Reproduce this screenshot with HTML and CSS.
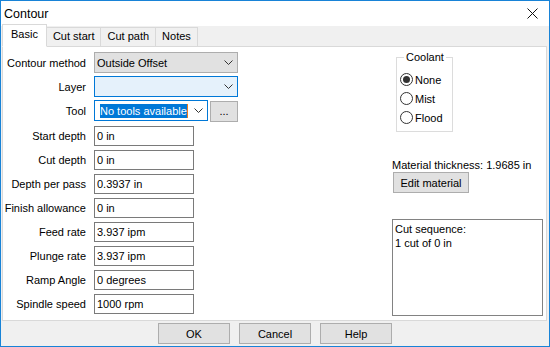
FILE: index.html
```html
<!DOCTYPE html>
<html lang="en">
<head>
  <meta charset="UTF-8" />
  <title>Contour</title>
  <link rel="stylesheet" href="styles.css">
</head>
<body>

<div class="window">
  <div class="titlebar">
    <span class="title">Contour</span>
    <svg class="close" width="11" height="11" viewBox="0 0 11 11">
      <path d="M0.5 0.5 L10.5 10.5 M10.5 0.5 L0.5 10.5" stroke="#111" stroke-width="1" fill="none"/>
    </svg>
  </div>

  <div class="tabs">
    <div class="tab active">Basic</div>
    <div class="tab">Cut start</div>
    <div class="tab">Cut path</div>
    <div class="tab">Notes</div>
  </div>

  <div class="panel">
    <div class="form">
      <div class="row">
        <label>Contour method</label>
        <div class="combo">
          <span>Outside Offset</span>
          <svg class="chev" width="9" height="5" viewBox="0 0 9 5"><path d="M0.5 0.5 L4.5 4.5 L8.5 0.5" stroke="#333" fill="none"/></svg>
        </div>
      </div>
      <div class="row">
        <label>Layer</label>
        <div class="combo focus">
          <span></span>
          <svg class="chev" width="9" height="5" viewBox="0 0 9 5"><path d="M0.5 0.5 L4.5 4.5 L8.5 0.5" stroke="#333" fill="none"/></svg>
        </div>
      </div>
      <div class="row">
        <label>Tool</label>
        <div class="combo edit">
          <span class="sel">No tools available</span><span class="caret"></span>
          <svg class="chev" width="9" height="5" viewBox="0 0 9 5"><path d="M0.5 0.5 L4.5 4.5 L8.5 0.5" stroke="#333" fill="none"/></svg>
        </div>
        <button class="btn dots">...</button>
      </div>

      <div class="row field first">
        <label>Start depth</label>
        <input type="text" value="0 in">
      </div>
      <div class="row field">
        <label>Cut depth</label>
        <input type="text" value="0 in">
      </div>
      <div class="row field">
        <label>Depth per pass</label>
        <input type="text" value="0.3937 in">
      </div>
      <div class="row field">
        <label>Finish allowance</label>
        <input type="text" value="0 in">
      </div>
      <div class="row field">
        <label>Feed rate</label>
        <input type="text" value="3.937 ipm">
      </div>
      <div class="row field">
        <label>Plunge rate</label>
        <input type="text" value="3.937 ipm">
      </div>
      <div class="row field">
        <label>Ramp Angle</label>
        <input type="text" value="0 degrees">
      </div>
      <div class="row field">
        <label>Spindle speed</label>
        <input type="text" value="1000 rpm">
      </div>
    </div>

    <div class="side">
      <fieldset class="group">
        <legend>Coolant</legend>
        <div class="radio"><span class="dot checked"></span>None</div>
        <div class="radio"><span class="dot"></span>Mist</div>
        <div class="radio"><span class="dot"></span>Flood</div>
      </fieldset>

      <div class="material">Material thickness: 1.9685 in</div>
      <button class="btn edit-mat">Edit material</button>

      <div class="sequence">
        <div>Cut sequence:</div>
        <div>1 cut of 0 in</div>
      </div>
    </div>
  </div>

  <div class="footer">
    <button class="btn wide">OK</button>
    <button class="btn wide">Cancel</button>
    <button class="btn wide">Help</button>
  </div>
</div>

</body>
</html>
```

FILE: styles.css
```css
body {
  margin: 0;
  font-family: "Liberation Sans", Arial, sans-serif;
  font-size: 11px;
  color: #000;
  background: #fff;
}
.window {
  width: 550px;
  height: 347px;
  box-sizing: border-box;
  border: 1px solid #1883d7;
  background: #f0f0f0;
  display: flex;
  flex-direction: column;
}
.titlebar {
  height: 25px;
  background: #fff;
  display: flex;
  align-items: center;
  padding-left: 3px;
  font-size: 12.5px;
}
.title { flex: 1; }
.close { margin-right: 11px; }

.tabs {
  height: 21px;
  margin-bottom: -1px;
  padding-left: 1px;
  display: flex;
  align-items: flex-end;
  position: relative;
  z-index: 1;
}
.tab {
  height: 18px;
  line-height: 17px;
  padding: 0 6px;
  border: 1px solid #d9d9d9;
  border-left: none;
  background: #f0f0f0;
  white-space: nowrap;
}
.tab.active {
  height: 21px;
  line-height: 19px;
  padding: 0 8px;
  background: #fff;
  border-left: 1px solid #d9d9d9;
  border-bottom: 1px solid #fff;
}

.panel {
  height: 275px;
  box-sizing: border-box;
  margin: 0 2px 0 1px;
  border: 1px solid #d9d9d9;
  background: #fff;
  display: flex;
  padding-top: 5px;
}

.form {
  display: flex;
  flex-direction: column;
  flex: none;
}
.row {
  display: flex;
  align-items: center;
  height: 21px;
  margin-bottom: 3px;
}
.row label {
  width: 83px;
  margin-right: 8px;
  text-align: right;
  white-space: nowrap;
}
.row.field {
  height: 20px;
  margin-bottom: 4px;
}
.row.first { margin-top: 2px; }

.combo {
  width: 144px;
  height: 21px;
  box-sizing: border-box;
  border: 1px solid #adadad;
  background: #e1e1e1;
  display: flex;
  align-items: center;
  padding-left: 2px;
  white-space: nowrap;
}
.combo span { flex: none; }
.combo .chev { margin-left: auto; margin-right: 4px; }
.combo.focus {
  border-color: #0078d7;
  background: #e5f1fb;
}
.combo.edit {
  width: 114px;
  border-color: #0078d7;
  background: #fff;
  padding-left: 5px;
}
.sel {
  background: #0078d7;
  color: #fff;
  line-height: 14px;
}
.caret {
  width: 1px;
  height: 14px;
  background: #f07a1c;
}

input {
  width: 100px;
  height: 20px;
  box-sizing: border-box;
  border: 1px solid #7a7a7a;
  padding: 0 2px;
  font: inherit;
  color: #000;
  outline: none;
}

.btn {
  font: inherit;
  color: #000;
  background: #e1e1e1;
  border: 1px solid #adadad;
  padding: 0;
  box-sizing: border-box;
  white-space: nowrap;
}
.dots {
  width: 28px;
  height: 21px;
  margin-left: 2px;
  margin-top: 1px;
}

.side {
  margin-left: auto;
  margin-right: 3px;
  width: 151px;
  flex: none;
  display: flex;
  flex-direction: column;
  align-items: flex-start;
}
.group {
  margin: -2px 0 0 4px;
  width: 57px;
  height: 82px;
  box-sizing: border-box;
  border: 1px solid #dcdcdc;
  padding: 5px 0 0 3px;
}
.group legend {
  padding: 0 2px;
  margin-left: 4px;
  line-height: 15px;
}
.radio {
  display: flex;
  align-items: center;
  height: 19px;
  gap: 2px;
}
.dot {
  width: 13px;
  height: 13px;
  box-sizing: border-box;
  border: 1px solid #333;
  border-radius: 50%;
  display: flex;
  align-items: center;
  justify-content: center;
}
.dot.checked::after {
  content: "";
  width: 7px;
  height: 7px;
  border-radius: 50%;
  background: #333;
}

.material {
  margin-top: 26px;
  line-height: 14px;
  white-space: nowrap;
}
.edit-mat {
  width: 76px;
  height: 21px;
  margin-left: 1px;
}
.sequence {
  margin-top: 26px;
  width: 151px;
  height: 97px;
  box-sizing: border-box;
  border: 1px solid #828282;
  padding: 2px 2px;
  line-height: 14px;
}

.footer {
  height: 25px;
  display: flex;
  justify-content: center;
  gap: 9px;
  padding-top: 2px;
  box-sizing: border-box;
}
.wide {
  width: 72px;
  height: 21px;
}
```
